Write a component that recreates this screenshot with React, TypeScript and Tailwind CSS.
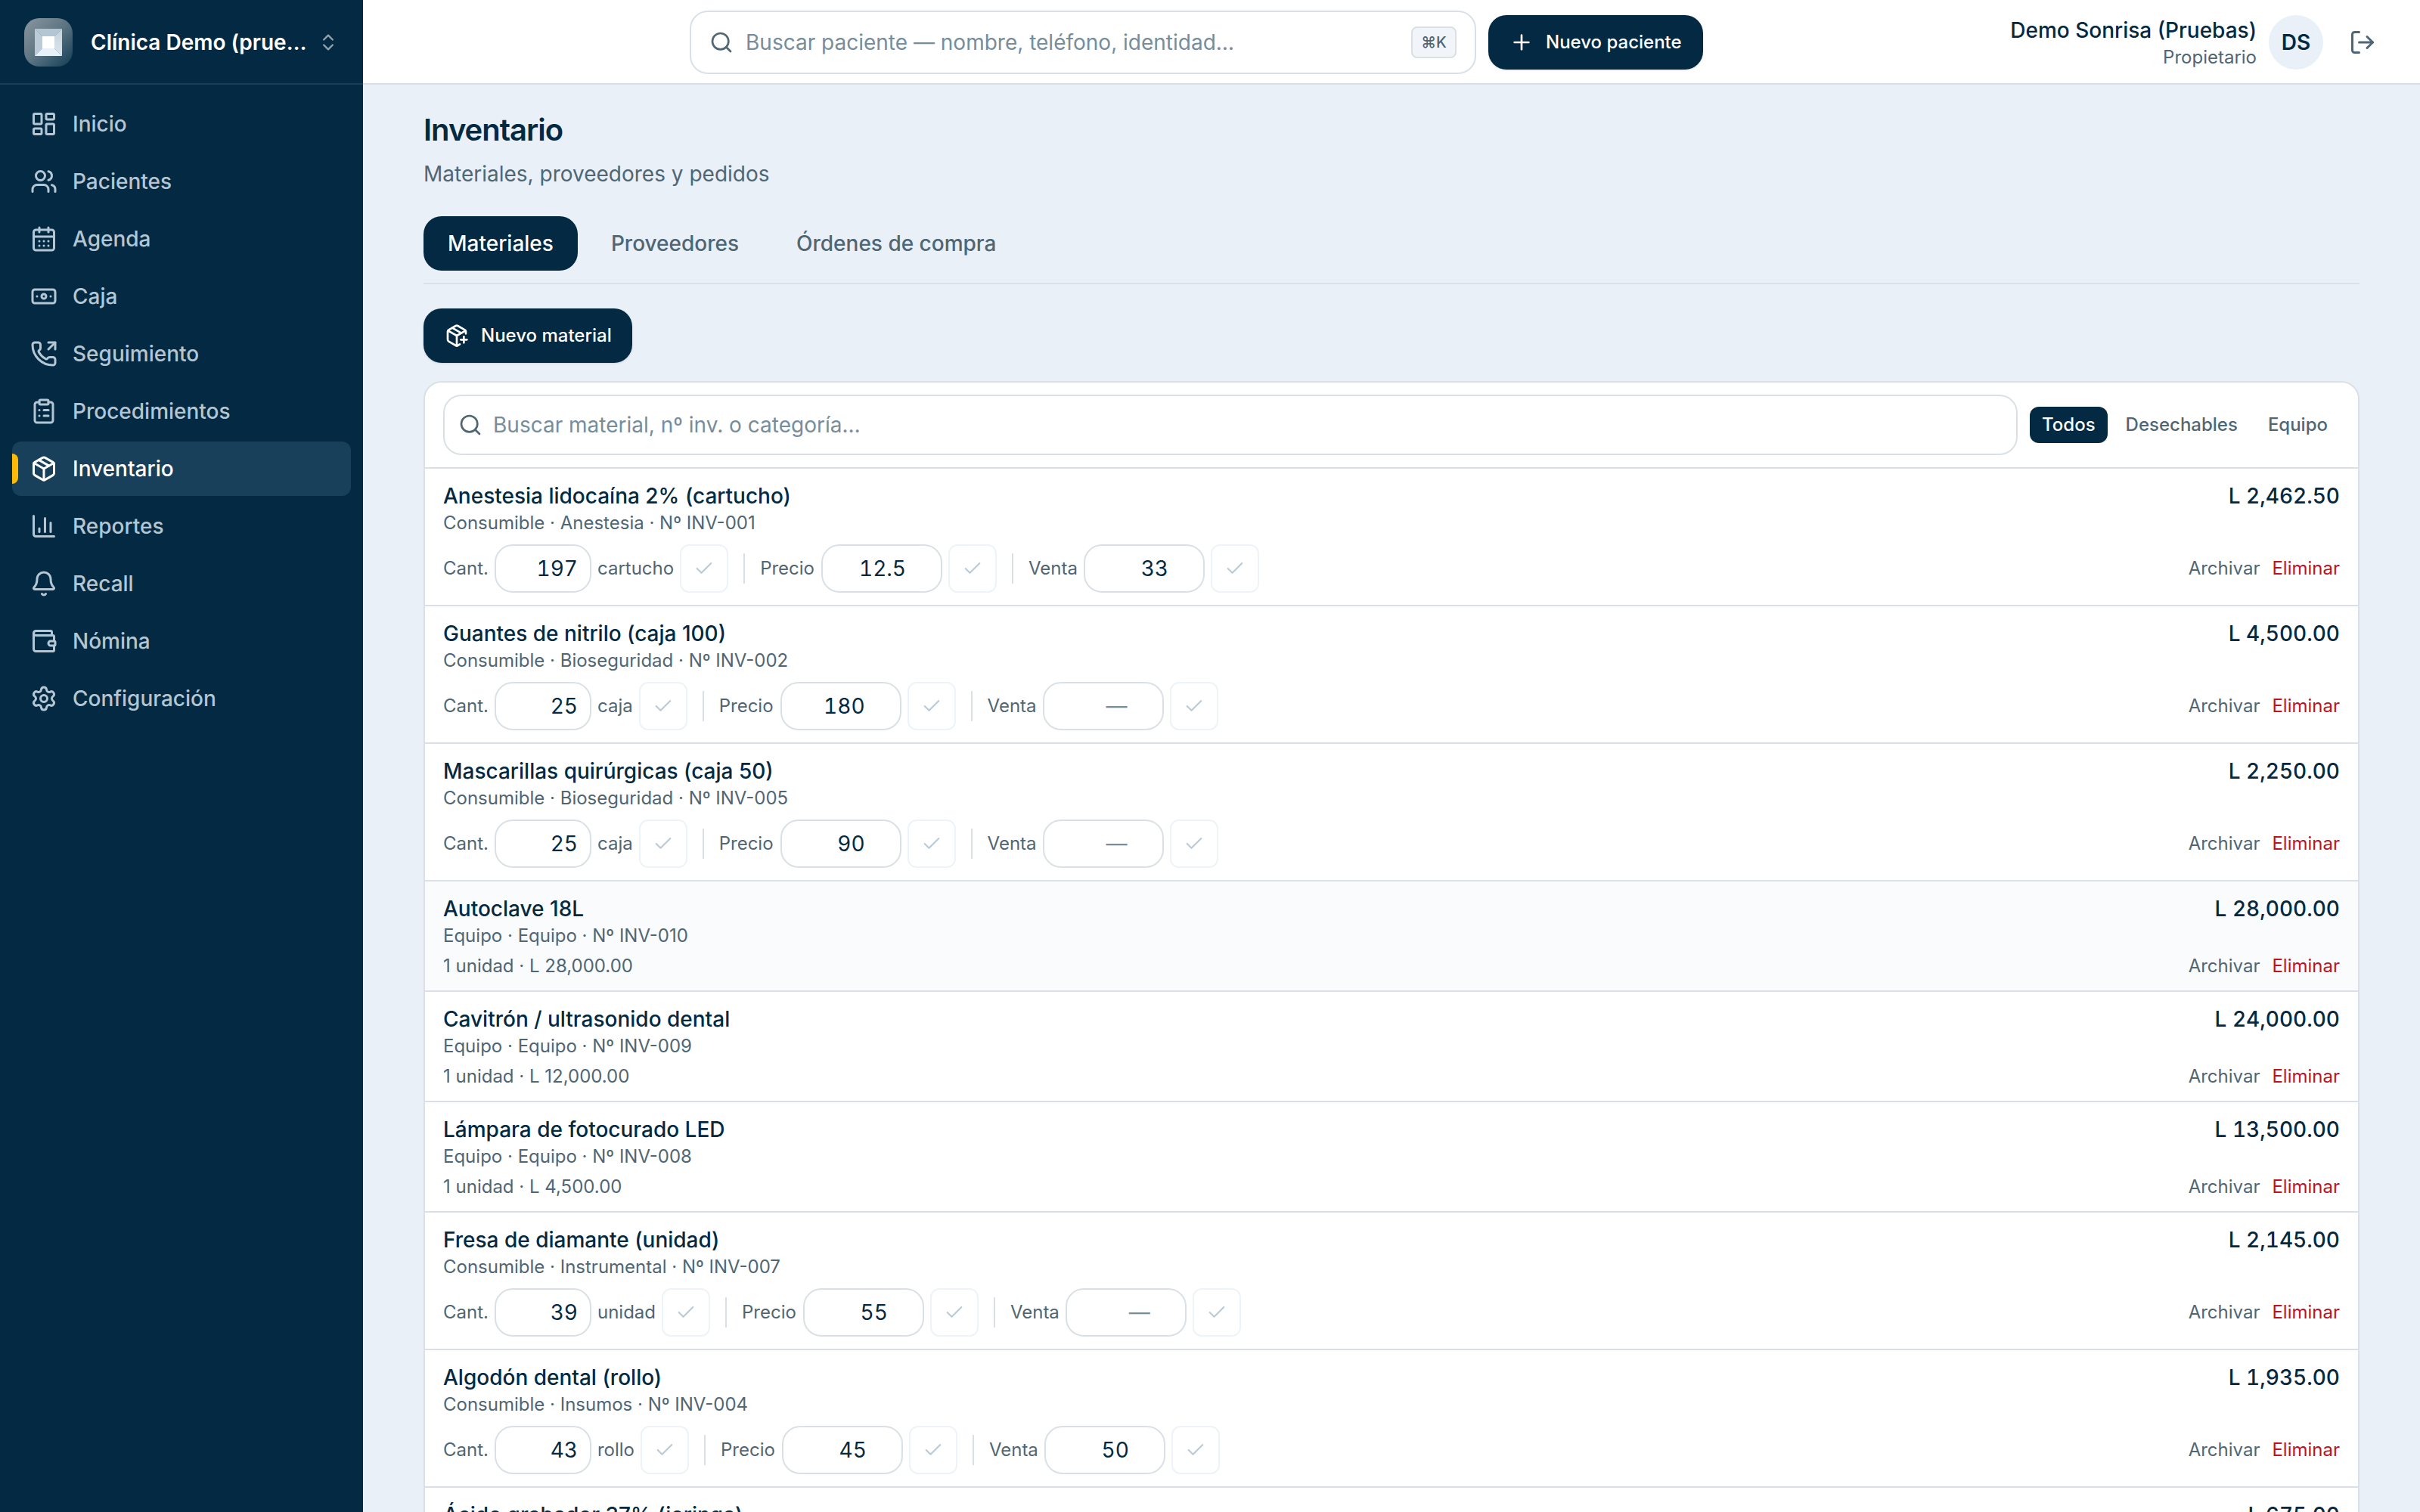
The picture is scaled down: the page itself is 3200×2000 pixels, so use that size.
import React from "react";
import {
  LayoutDashboard, Users, CalendarDays, Banknote, PhoneOutgoing, ClipboardList, Package, ChartColumn,
  Bell, Wallet, Settings, Search, Plus, LogOut, ChevronsUpDown, PackagePlus, Check,
} from "lucide-react";

const nav = [
  { icon: LayoutDashboard, label: "Inicio" },
  { icon: Users, label: "Pacientes" },
  { icon: CalendarDays, label: "Agenda" },
  { icon: Banknote, label: "Caja" },
  { icon: PhoneOutgoing, label: "Seguimiento" },
  { icon: ClipboardList, label: "Procedimientos" },
  { icon: Package, label: "Inventario", active: true },
  { icon: ChartColumn, label: "Reportes" },
  { icon: Bell, label: "Recall" },
  { icon: Wallet, label: "Nómina" },
  { icon: Settings, label: "Configuración" },
];

type Item = {
  name: string; meta: string; total: string;
  qty?: string; unit?: string; price?: string; sale?: string; note?: string; hover?: boolean;
};

const items: Item[] = [
  { name: "Anestesia lidocaína 2% (cartucho)", meta: "Consumible · Anestesia · Nº INV-001", total: "L 2,462.50", qty: "197", unit: "cartucho", price: "12.5", sale: "33" },
  { name: "Guantes de nitrilo (caja 100)", meta: "Consumible · Bioseguridad · Nº INV-002", total: "L 4,500.00", qty: "25", unit: "caja", price: "180" },
  { name: "Mascarillas quirúrgicas (caja 50)", meta: "Consumible · Bioseguridad · Nº INV-005", total: "L 2,250.00", qty: "25", unit: "caja", price: "90" },
  { name: "Autoclave 18L", meta: "Equipo · Equipo · Nº INV-010", total: "L 28,000.00", note: "1 unidad · L 28,000.00", hover: true },
  { name: "Cavitrón / ultrasonido dental", meta: "Equipo · Equipo · Nº INV-009", total: "L 24,000.00", note: "1 unidad · L 12,000.00" },
  { name: "Lámpara de fotocurado LED", meta: "Equipo · Equipo · Nº INV-008", total: "L 13,500.00", note: "1 unidad · L 4,500.00" },
  { name: "Fresa de diamante (unidad)", meta: "Consumible · Instrumental · Nº INV-007", total: "L 2,145.00", qty: "39", unit: "unidad", price: "55" },
  { name: "Algodón dental (rollo)", meta: "Consumible · Insumos · Nº INV-004", total: "L 1,935.00", qty: "43", unit: "rollo", price: "45", sale: "50" },
  { name: "Ácido grabador 37% (jeringa)", meta: "Consumible · Restauración · Nº INV-006", total: "L 675.00", qty: "15", unit: "jeringa", price: "45" },
];

function Logo() {
  return (
    <svg viewBox="0 0 64 64" className="size-16 shrink-0">
      <defs>
        <linearGradient id="tile" x1="0" y1="0" x2="1" y2="1">
          <stop offset="0" stopColor="#8b979f" />
          <stop offset="0.5" stopColor="#5c7482" />
          <stop offset="1" stopColor="#123c55" />
        </linearGradient>
        <linearGradient id="side" x1="0" y1="0" x2="0" y2="1">
          <stop offset="0" stopColor="#c3d1dc" />
          <stop offset="1" stopColor="#dde5eb" />
        </linearGradient>
      </defs>
      <rect width="64" height="64" rx="20" fill="url(#tile)" />
      <path d="M14 14H50L40 24H24Z" fill="#b4c6d4" />
      <path d="M14 14L24 24V40L14 50Z" fill="#bccbd8" />
      <path d="M50 14L40 24V40L50 50Z" fill="url(#side)" />
      <path d="M14 50L24 40H40L50 50Z" fill="#e9f0f7" />
      <rect x="24" y="24" width="16" height="16" fill="#fff" />
    </svg>
  );
}

function Sidebar() {
  return (
    <aside className="flex w-[480px] shrink-0 flex-col bg-[#032a42]">
      <div className="flex h-28 shrink-0 items-center border-b-2 border-[#18405a] px-8 pt-0.5">
        <Logo />
        <span className="ml-6 min-w-0 flex-1 truncate text-[28px] font-semibold text-white">Clínica Demo (pruebas)</span>
        <ChevronsUpDown className="ml-2 size-7 shrink-0 text-[#93a3ae]" />
      </div>
      <nav className="flex flex-col gap-1 p-4">
        {nav.map(({ icon: Icon, label, active }) => (
          <a key={label} className={active
            ? "relative flex h-[72px] items-center gap-5 rounded-xl bg-[#18405a] px-6 text-[28px] font-medium text-white"
            : "flex h-[72px] items-center gap-5 rounded-xl px-6 text-[28px] font-medium text-[#b4c6d4]"}>
            {active && <span className="absolute left-0 top-4 h-10 w-2 rounded-r-full bg-[#ffba08]" />}
            <Icon className="size-9" />
            {label}
          </a>
        ))}
      </nav>
    </aside>
  );
}

function Header() {
  return (
    <header className="flex h-28 shrink-0 items-center border-b-2 border-[#dae0e5] bg-white pl-[432px] pr-10 pt-0.5">
      <div className="flex h-[84px] w-[1040px] items-center rounded-3xl border-2 border-[#dae0e5] pl-6 pr-6">
        <Search className="size-8 text-[#4f6675]" />
        <span className="ml-4 flex-1 text-[28px] text-[#768d9b]">Buscar paciente — nombre, teléfono, identidad…</span>
        <kbd className="flex h-[42px] w-[60px] items-center justify-center rounded-lg border-2 border-[#dae0e5] bg-[#f1f5f9] font-[Inter] text-[20px] font-medium text-[#4f6675]">⌘K</kbd>
      </div>
      <button className="ml-4 flex h-[72px] w-[284px] items-center gap-4 whitespace-nowrap rounded-3xl bg-[#032a42] pl-7 text-[24px] font-medium text-white shadow-sm">
        <Plus className="size-8" />
        Nuevo paciente
      </button>
      <div className="ml-auto flex items-center gap-4">
        <div className="text-right">
          <div className="text-[28px] leading-10 font-medium text-[#032a42]">Demo Sonrisa (Pruebas)</div>
          <div className="text-[24px] leading-8 text-[#4f6675]">Propietario</div>
        </div>
        <div className="flex size-[72px] items-center justify-center rounded-full bg-[#e9f0f7] text-[28px] font-semibold text-[#032a42]">DS</div>
        <div className="flex size-[72px] items-center justify-center text-[#4f6675]"><LogOut className="size-9" /></div>
      </div>
    </header>
  );
}

function CheckButton() {
  return (
    <div className="ml-2 flex size-16 items-center justify-center rounded-xl border-2 border-[#edf3f8] text-[#b9c9d6]">
      <Check className="size-7" strokeWidth={1.75} />
    </div>
  );
}

function Controls({ item }: { item: Item }) {
  return (
    <div className="mt-3 flex h-16 items-center text-[24px] text-[#4f6675]">
      <span>Cant.</span>
      <span className="ml-2 flex h-16 w-32 items-center justify-end rounded-3xl border-2 border-[#dae0e5] bg-white pr-4 text-[28px] tabular-nums text-[#032a42]">{item.qty}</span>
      <span className="ml-2">{item.unit}</span>
      <CheckButton />
      <span className="mx-5 h-10 w-0.5 bg-[#dae0e5]" />
      <span>Precio</span>
      <span className="ml-[9px] flex h-16 w-40 items-center justify-end rounded-3xl border-2 border-[#dae0e5] bg-white pr-[46px] text-[28px] tabular-nums text-[#032a42]">{item.price}</span>
      <CheckButton />
      <span className="mx-5 h-10 w-0.5 bg-[#dae0e5]" />
      <span>Venta</span>
      <span className={item.sale
        ? "ml-2 flex h-16 w-40 items-center justify-end rounded-3xl border-2 border-[#dae0e5] bg-white pr-[46px] text-[28px] tabular-nums text-[#032a42]"
        : "ml-2 flex h-16 w-40 items-center justify-end rounded-3xl border-2 border-[#dae0e5] bg-white pr-[46px] text-[28px] tabular-nums text-[#768d9b]"}>{item.sale ?? "—"}</span>
      <CheckButton />
    </div>
  );
}

function Row({ item }: { item: Item }) {
  return (
    <div className={item.hover ? "flex justify-between border-b-2 border-[#dae0e5] bg-[#f9fbfc] px-6 py-4" : "flex justify-between border-b-2 border-[#dae0e5] px-6 py-4"}>
      <div>
        <div className="text-[28px] leading-10 font-medium text-[#032a42]">{item.name}</div>
        <div className="text-[24px] leading-8 text-[#4f6675]">{item.meta}</div>
        {item.note ? <div className="mt-2 text-[24px] leading-8 text-[#4f6675]">{item.note}</div> : <Controls item={item} />}
      </div>
      <div className="flex flex-col items-end justify-between">
        <div className="text-[28px] leading-10 font-medium tabular-nums text-[#032a42]">{item.total}</div>
        <div className={item.note ? "flex h-8 items-center gap-4 text-[24px]" : "flex h-16 items-center gap-4 text-[24px]"}>
          <span className="text-[#4f6675]">Archivar</span>
          <span className="text-[#c1121f]">Eliminar</span>
        </div>
      </div>
    </div>
  );
}

export default function App() {
  return (
    <div className="flex h-[2000px] w-[3200px] overflow-hidden bg-[#e9f0f7] font-[Inter,sans-serif] antialiased">
      <Sidebar />
      <div className="flex min-w-0 flex-1 flex-col">
        <Header />
        <main className="flex flex-col px-20 pt-8">
          <h1 className="text-[40px] leading-[56px] font-semibold tracking-[-0.025em] text-[#032a42]">Inventario</h1>
          <p className="mt-2.5 text-[28px] leading-10 text-[#4f6675]">Materiales, proveedores y pedidos</p>
          <div className="mt-9 flex gap-3 border-b-2 border-[#dae0e5] pb-4 text-[28px] font-medium">
            <span className="flex h-[72px] items-center rounded-3xl bg-[#032a42] px-8 text-white">Materiales</span>
            <span className="flex h-[72px] items-center px-8 text-[#4f6675]">Proveedores</span>
            <span className="flex h-[72px] items-center px-8 text-[#4f6675]">Órdenes de compra</span>
          </div>
          <button className="mt-8 flex h-[72px] w-[276px] items-center gap-4 self-start whitespace-nowrap rounded-3xl bg-[#032a42] pl-7 text-[24px] font-medium text-white shadow-sm">
            <PackagePlus className="size-8" />
            Nuevo material
          </button>
          <section className="mt-6 overflow-hidden rounded-3xl border-2 border-[#dae0e5] bg-white">
            <div className="flex items-center gap-4 border-b-2 border-[#dae0e5] px-6 py-4">
              <div className="flex h-20 flex-1 items-center rounded-3xl border-2 border-[#dae0e5] pl-[18px]">
                <Search className="size-8 text-[#4f6675]" />
                <span className="ml-3.5 text-[28px] text-[#768d9b]">Buscar material, nº inv. o categoría…</span>
              </div>
              <div className="flex gap-2 text-[24px] font-medium">
                <span className="flex h-12 items-center rounded-xl bg-[#032a42] px-4 text-white">Todos</span>
                <span className="flex h-12 items-center px-4 text-[#4f6675]">Desechables</span>
                <span className="flex h-12 items-center px-4 text-[#4f6675]">Equipo</span>
              </div>
            </div>
            {items.map((item) => <Row key={item.name} item={item} />)}
          </section>
        </main>
      </div>
    </div>
  );
}
